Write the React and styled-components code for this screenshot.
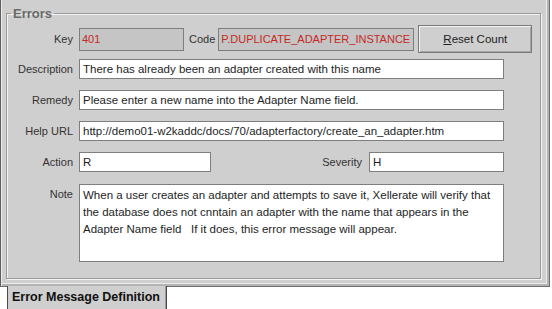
import React from "react";
import styled, { createGlobalStyle } from "styled-components";

const GlobalStyle = createGlobalStyle`
  html, body {
    margin: 0;
    padding: 0;
    background: #ffffff;
  }
  body {
    font-family: "Liberation Sans", Arial, sans-serif;
  }
`;

const Page = styled.div`
  width: 552px;
  height: 309px;
  overflow: hidden;
  display: flex;
  flex-direction: column;
  background: #ffffff;
`;

const Panel = styled.div`
  box-sizing: border-box;
  width: 550px;
  height: 287px;
  padding: 6px 8px 8px 5px;
  background: #cfcfcf;
  border-left: 1px solid #5e5e5e;
  border-right: 1px solid #6e6e6e;
  border-bottom: 1px solid #6e6e6e;
  box-shadow: inset 1px 0 0 #ececec, inset -2px -2px 0 #b4b4b4, inset -3px -3px 0 #ececec;
`;

const GroupBox = styled.fieldset`
  box-sizing: border-box;
  margin: 0;
  height: 273px;
  padding: 0;
  border: 1px solid #9a9a9a;
  box-shadow: inset 1px 1px 0 #f2f2f2, 1px 1px 0 #f2f2f2;
  display: flex;
  flex-direction: column;
`;

const Legend = styled.legend`
  margin-left: 4px;
  padding: 0 2px;
  font-size: 13px;
  font-weight: bold;
  color: #6a6a6a;
  line-height: 15px;
`;

const Row = styled.div`
  display: flex;
  align-items: ${(p) => (p.$top ? "flex-start" : "center")};
  width: ${(p) => (p.$w ? `${p.$w}px` : "auto")};
  margin-top: ${(p) => p.$gap}px;
`;

const Label = styled.span`
  box-sizing: border-box;
  width: ${(p) => (p.$w ? `${p.$w}px` : "auto")};
  flex: none;
  text-align: right;
  margin-right: ${(p) => p.$mr ?? 6}px;
  margin-left: ${(p) => p.$ml ?? 0}px;
  padding-top: ${(p) => (p.$top ? 4 : 0)}px;
  font-size: 11px;
  color: #333333;
  white-space: nowrap;
`;

const Field = styled.div`
  box-sizing: border-box;
  flex: none;
  width: ${(p) => p.$w}px;
  height: ${(p) => p.$h}px;
  padding: 0 ${(p) => (p.$disabled ? 2 : 3)}px;
  display: flex;
  align-items: center;
  border: 1px solid #7e7e7e;
  background: ${(p) => (p.$disabled ? "#c5c5c5" : "#ffffff")};
  color: ${(p) => (p.$disabled ? "#c42a24" : "#1e1e1e")};
  font-size: ${(p) => (p.$disabled ? 11 : 11.5)}px;
  white-space: nowrap;
  overflow: hidden;
`;

const Spacer = styled.div`
  flex: 1;
`;

const NoteArea = styled.div`
  box-sizing: border-box;
  width: 425px;
  height: 78px;
  padding: 2px 3px;
  border: 1px solid #7e7e7e;
  background: #ffffff;
  color: #1e1e1e;
  font-size: 11.5px;
  line-height: 17px;
  white-space: pre;
  overflow: hidden;
`;

const Button = styled.button`
  box-sizing: border-box;
  flex: none;
  width: 114px;
  height: 28px;
  margin-left: 4px;
  padding: 0;
  background: #cfcfcf;
  border: 1px solid #7a7a7a;
  box-shadow: inset 1px 1px 0 #f4f4f4, inset -1px -1px 0 #a6a6a6;
  font-family: "Liberation Sans", Arial, sans-serif;
  font-size: 11.5px;
  color: #222222;
`;

const Mnemonic = styled.span`
  text-decoration: underline;
`;

const TabStrip = styled.div`
  display: flex;
  padding-left: 7px;
  margin-top: -1px;
`;

const Tab = styled.div`
  box-sizing: border-box;
  width: 160px;
  height: 23px;
  padding: 4px 0 0 4px;
  background: #cfcfcf;
  border-left: 1px solid #4a4a4a;
  border-right: 1px solid #4a4a4a;
  box-shadow: inset -1px 0 0 #9a9a9a;
  font-size: 12.5px;
  font-weight: bold;
  color: #111111;
  white-space: nowrap;
`;

const note =
  "When a user creates an adapter and attempts to save it, Xellerate will verify that\n" +
  "the database does not cnntain an adapter with the name that appears in the\n" +
  "Adapter Name field   If it does, this error message will appear.";

export default function App() {
  return (
    <Page>
      <GlobalStyle />
      <Panel>
        <GroupBox>
          <Legend>Errors</Legend>
          <Row $gap={4}>
            <Label $w={66}>Key</Label>
            <Field $w={105} $h={23} $disabled>401</Field>
            <Label $ml={5} $mr={3}>Code</Label>
            <Field $w={196} $h={23} $disabled>P.DUPLICATE_ADAPTER_INSTANCE</Field>
            <Button>
              <Mnemonic>R</Mnemonic>eset Count
            </Button>
          </Row>
          <Row $gap={6}>
            <Label $w={66}>Description</Label>
            <Field $w={425} $h={20}>There has already been an adapter created with this name</Field>
          </Row>
          <Row $gap={11}>
            <Label $w={66}>Remedy</Label>
            <Field $w={425} $h={20}>Please enter a new name into the Adapter Name field.</Field>
          </Row>
          <Row $gap={11}>
            <Label $w={66}>Help URL</Label>
            <Field $w={425} $h={20}>
              http://demo01-w2kaddc/docs/70/adapterfactory/create_an_adapter.htm
            </Field>
          </Row>
          <Row $gap={11} $w={497}>
            <Label $w={66}>Action</Label>
            <Field $w={132} $h={20}>R</Field>
            <Spacer />
            <Label $mr={7}>Severity</Label>
            <Field $w={135} $h={20}>H</Field>
          </Row>
          <Row $gap={12} $top>
            <Label $w={66} $top>Note</Label>
            <NoteArea>{note}</NoteArea>
          </Row>
        </GroupBox>
      </Panel>
      <TabStrip>
        <Tab>Error Message Definition</Tab>
      </TabStrip>
    </Page>
  );
}
